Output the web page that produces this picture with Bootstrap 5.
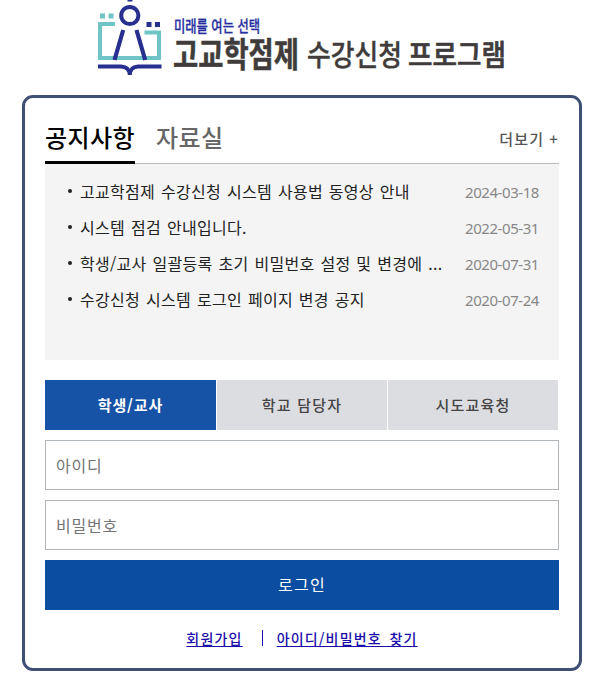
<!DOCTYPE html>
<html lang="ko">
<head>
<meta charset="utf-8">
<meta name="viewport" content="width=device-width, initial-scale=1">
<title>고교학점제 수강신청 프로그램</title>
<link href="https://cdn.jsdelivr.net/npm/bootstrap@5.3.0/dist/css/bootstrap.min.css" rel="stylesheet">
<style>
body{font-family:"Noto Sans CJK KR",sans-serif;font-size:16px;color:#222;background:#fff;overflow:hidden}
.brand-logo{height:95px}
.login-panel{width:560px;height:576px;margin-left:22px;border:3px solid #3f4f75;border-radius:11px;padding:20px 20px 0}
.board-head{height:46px;border-bottom:1px solid #bbb}
.board-tab{height:46px;font-size:24px;line-height:37px;letter-spacing:.42px;font-weight:500;color:#666;text-decoration:none;white-space:nowrap}
.board-tab.active{color:#000;border-bottom:3px solid #000}
.board-tab + .board-tab{margin-left:21px}
.more-link{font-size:15px;line-height:42px;letter-spacing:1.1px;font-weight:500;color:#555;text-decoration:none}
.board-list{height:196px;background:#f4f4f4;padding:10px 20px 0 22px}
.board-list li{height:36px;line-height:36px}
.dot{width:4px;height:4px;background:#222;margin:0 8px 3px 1px}
.post{width:363px;letter-spacing:.28px;word-spacing:1.2px;color:#222;text-decoration:none;margin-top:-2px}
.post-date{font-family:"Noto Sans",sans-serif;font-size:15px;letter-spacing:-.43px;color:#888}
.role-tabs{display:grid;grid-template-columns:171px 170px 170px;height:50px;gap:1px;margin:20px 0 10px}
.role-tabs button{border:0;background:#dcdde1;color:#444;font-size:15px;font-weight:500;letter-spacing:1.2px;padding:0}
.role-tabs button.active{background:#1653a6;color:#fff;font-weight:700;letter-spacing:.9px}
.login-panel .form-control{height:50px;border:1px solid #b0b5ba;border-radius:0;padding:0 10px;margin-bottom:10px;letter-spacing:.8px}
.login-panel .form-control::placeholder{color:#757575}
.login-btn{height:50px;background:#0b4da0;color:#fff;border:0;border-radius:0;letter-spacing:1.2px;padding:0 0 2px}
.help-links{margin-top:18px;font-size:14px;line-height:20px;font-weight:500;letter-spacing:1.2px;word-spacing:2.4px}
.help-links a{color:#1a0dab;text-underline-offset:2px}
.bar{width:1px;height:16px;background:#1a0dab;margin:0 14px 0 19px}
</style>
</head>
<body>
<header>
<svg class="brand-logo d-block" width="605" height="95" viewBox="0 0 605 95" role="img">
  <g fill="none" stroke="#6fc5c6" stroke-width="4">
    <path d="M115 24H100V58H159V32.500H144.500"/>
  </g>
  <path fill="#6fc5c6" d="M100 13.500h5v5h-5zM108.500 13.500h5v5h-5z"/>
  <path fill="#272f8f" d="M146.500 22h5v5h-5zM155 22h5v5h-5zM127.500 0h5v1.500h-5z"/>
  <g fill="none" stroke="#272f8f">
    <circle cx="129.800" cy="15.500" r="8.600" stroke-width="4"/>
    <path stroke-width="4.200" d="M123.200 30L114.500 60M136.500 30L145.200 60"/>
    <path stroke-width="4" d="M98 66.500H121Q129.800 67 129.800 75Q129.800 67 138 66.500H161.500"/>
  </g>
  <g font-family="Noto Sans CJK KR, sans-serif" font-weight="500" stroke-linejoin="round">
    <text x="174" y="31.500" font-size="16" fill="#272f9f" stroke="#272f9f" stroke-width=".3" textLength="86" lengthAdjust="spacingAndGlyphs">미래를 여는 선택</text>
    <text x="173" y="67" font-size="34" fill="#403c3b" stroke="#403c3b" stroke-width=".5" font-weight="700" textLength="126" lengthAdjust="spacingAndGlyphs">고교학점제</text>
    <text x="307" y="66" font-size="29" fill="#403c3b" stroke="#403c3b" stroke-width=".4" textLength="95" lengthAdjust="spacingAndGlyphs">수강신청</text>
    <text x="408" y="66" font-size="29" fill="#403c3b" stroke="#403c3b" stroke-width=".7" textLength="98" lengthAdjust="spacingAndGlyphs">프로그램</text>
  </g>
</svg>
</header>
<main class="login-panel">
  <div class="board-head d-flex justify-content-between">
    <nav class="d-flex">
      <a class="board-tab active" href="#">공지사항</a>
      <a class="board-tab" href="#">자료실</a>
    </nav>
    <a class="more-link" href="#">더보기 +</a>
  </div>
  <ul class="board-list list-unstyled mb-0">
    <li class="d-flex align-items-center"><span class="dot rounded-circle flex-shrink-0"></span><a class="post text-nowrap" href="#">고교학점제 수강신청 시스템 사용법 동영상 안내</a><span class="post-date ms-auto">2024-03-18</span></li>
    <li class="d-flex align-items-center"><span class="dot rounded-circle flex-shrink-0"></span><a class="post text-nowrap" href="#">시스템 점검 안내입니다.</a><span class="post-date ms-auto">2022-05-31</span></li>
    <li class="d-flex align-items-center"><span class="dot rounded-circle flex-shrink-0"></span><a class="post text-nowrap" href="#">학생/교사 일괄등록 초기 비밀번호 설정 및 변경에 ...</a><span class="post-date ms-auto">2020-07-31</span></li>
    <li class="d-flex align-items-center"><span class="dot rounded-circle flex-shrink-0"></span><a class="post text-nowrap" href="#">수강신청 시스템 로그인 페이지 변경 공지</a><span class="post-date ms-auto">2020-07-24</span></li>
  </ul>
  <form>
    <div class="role-tabs">
      <button type="button" class="active">학생/교사</button>
      <button type="button">학교 담당자</button>
      <button type="button">시도교육청</button>
    </div>
    <input class="form-control" type="text" placeholder="아이디">
    <input class="form-control" type="password" placeholder="비밀번호">
    <button type="button" class="btn login-btn w-100 d-block">로그인</button>
  </form>
  <div class="help-links d-flex justify-content-center align-items-center">
    <a href="#">회원가입</a><span class="bar"></span><a href="#">아이디/비밀번호 찾기</a>
  </div>
</main>
<script src="https://cdn.jsdelivr.net/npm/bootstrap@5.3.0/dist/js/bootstrap.bundle.min.js"></script>
</body>
</html>
